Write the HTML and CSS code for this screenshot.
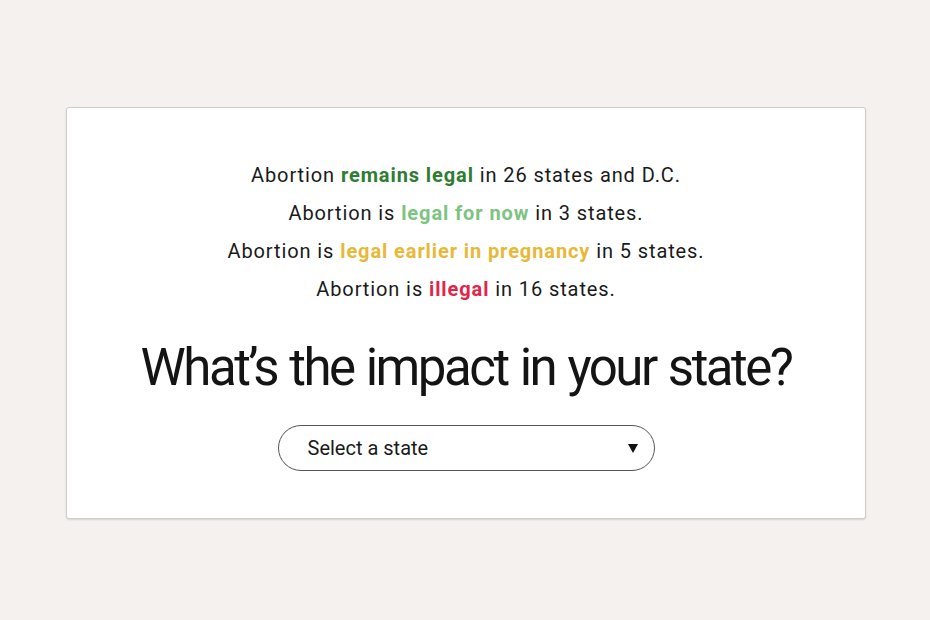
FILE: index.html
```html
<!DOCTYPE html>
<html lang="en">
<head>
<meta charset="utf-8">
<title>Abortion status</title>
<link rel="stylesheet" href="styles.css">
</head>
<body>
<main class="page">
  <section class="card">
    <div class="summary">
      <p class="line">Abortion <strong class="green">remains legal</strong> in 26 states and D.C.</p>
      <p class="line">Abortion is <strong class="lightgreen">legal for now</strong> in 3 states.</p>
      <p class="line">Abortion is <strong class="yellow">legal earlier in pregnancy</strong> in 5 states.</p>
      <p class="line">Abortion is <strong class="red">illegal</strong> in 16 states.</p>
    </div>
    <h1 class="heading">What’s the impact in your state?</h1>
    <div class="select">
      <span class="select-label">Select a state</span>
      <svg class="select-arrow" width="10" height="10" viewBox="0 0 10 10" aria-hidden="true"><path d="M0 1 H10 L5 10 Z" fill="#111"/></svg>
    </div>
  </section>
</main>
</body>
</html>
```
FILE: styles.css
```css
html, body {
  margin: 0;
  padding: 0;
}
body {
  background: #f4f1ef;
  font-family: Roboto, "Liberation Sans", sans-serif;
  color: #1a1a1a;
}
.page {
  width: 930px;
  height: 620px;
  padding-top: 107px;
  box-sizing: border-box;
}
.card {
  width: 800px;
  height: 412px;
  margin-left: 66px;
  box-sizing: border-box;
  background: #fff;
  border: 1px solid #cfcccb;
  border-radius: 3px;
  box-shadow: 0 1px 2px rgba(0,0,0,0.12);
  display: flex;
  flex-direction: column;
  align-items: center;
  padding-top: 48px;
}
.summary {
  display: flex;
  flex-direction: column;
  align-items: center;
}
.line {
  margin: 0;
  font-size: 20px;
  line-height: 38px;
  letter-spacing: 0.9px;
}
.line strong {
  font-weight: 700;
}
.green { color: #2e7d32; }
.lightgreen { color: #7cc47f; }
.yellow { color: #e8b839; }
.red { color: #e0264a; }
.heading {
  margin: 30px 0 0;
  font-size: 51px;
  font-weight: 400;
  line-height: 60px;
  letter-spacing: -2.5px;
  word-spacing: 2px;
  color: #141414;
}
.select {
  margin-top: 27px;
  width: 377px;
  height: 46px;
  box-sizing: border-box;
  border: 1px solid #555;
  border-radius: 23px;
  display: flex;
  align-items: center;
  justify-content: space-between;
  padding: 0 16px 0 29px;
}
.select-label {
  font-size: 20px;
}
.select-arrow {
  display: block;
}
```
